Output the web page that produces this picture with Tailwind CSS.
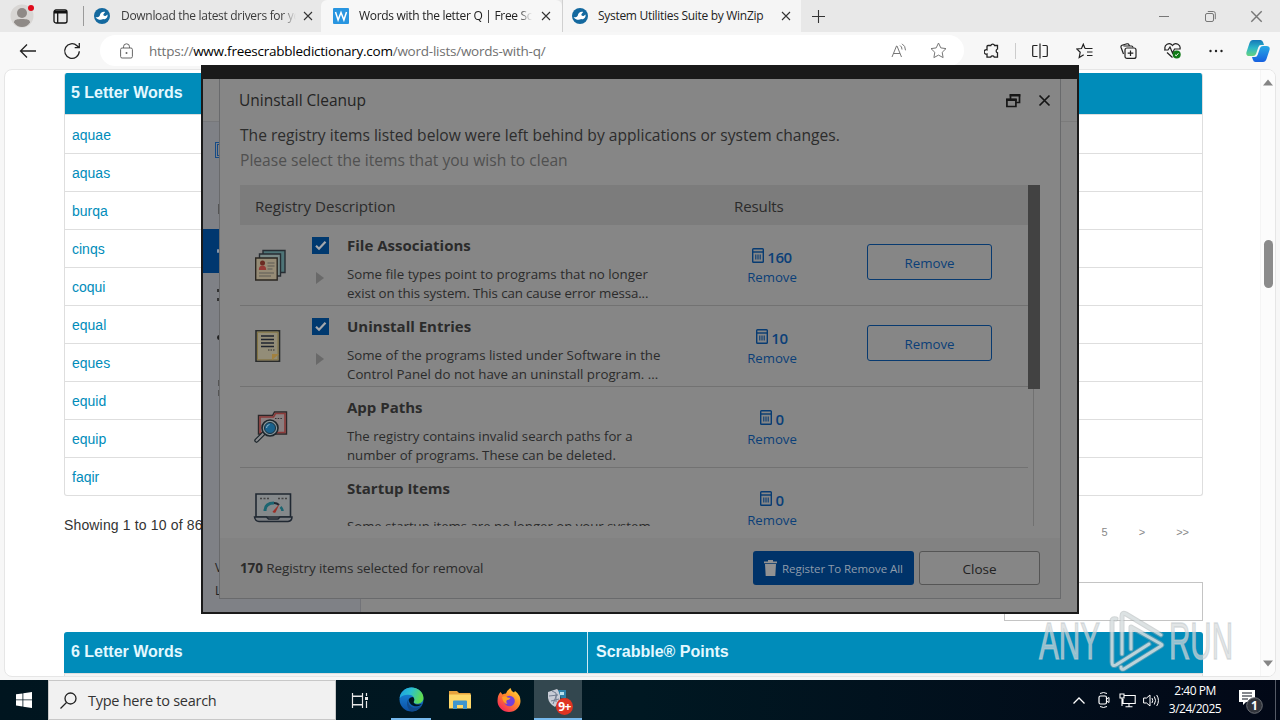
<!DOCTYPE html>
<html lang="en">
<head>
    <meta charset="UTF-8">
    <meta name="viewport" content="width=device-width, initial-scale=1.0">
    <title>Words with the letter Q | Free Scrabble Dictionary</title>
    <script src="https://cdn.jsdelivr.net/npm/@tailwindcss/browser@4"></script>
    <style>
        body {
            font-family: 'Open Sans', 'Noto Sans', sans-serif;
        }
        .page {
            font-family: 'Liberation Sans', Arial, sans-serif;
        }
    </style>
</head>
<body class="relative w-[1280px] h-[720px] overflow-hidden bg-[#f7f7f7] flex flex-col whitespace-nowrap text-[#222]">
    <!-- icons used more than once -->
    <svg class="hidden">
        <symbol id="x" viewBox="0 0 10 10"><path d="M1 1l8 8M9 1l-8 8" fill="none" stroke="currentColor" stroke-width="1.1"/></symbol>
        <symbol id="wrench" viewBox="0 0 16 16">
            <circle cx="8" cy="8" r="8" fill="#14699f"/>
            <path d="M1.500 9.200c2 .2 3.300-.3 4.200-1.500C6.200 5 8.500 3.300 11.200 4L9.300 6.200l.5 1.600 1.800.3 1.900-1.700c.6 3-1.800 5-4.300 4.700-2.200 1-4.800 1.300-7.700-1.900z" fill="#fff"/>
        </symbol>
        <symbol id="bin" viewBox="0 0 12 15">
            <rect x=".7" y=".7" width="10.600" height="13.600" rx=".8" fill="none" stroke="#073b72" stroke-width="1.400"/>
            <path d="M1 4h10" stroke="#073b72" stroke-width="1.400"/>
            <path d="M3.800 6.500v5M6 6.500v5M8.200 6.500v5" stroke="#073b72" stroke-width="1.100"/>
        </symbol>
        <symbol id="check" viewBox="0 0 17 17">
            <rect width="17" height="17" fill="#00396f"/>
            <path d="M4 8.700l3 3 6.500-7" fill="none" stroke="#a5a8ac" stroke-width="2.200"/>
        </symbol>
    </svg>

    <!-- tab strip -->
    <div class="flex h-8 shrink-0 items-center bg-[#e8e8e8] text-[12px]">
        <svg class="ml-[10px] w-6 h-6" viewBox="0 0 24 24">
            <circle cx="12" cy="12" r="11.500" fill="#d8d6d4"/>
            <circle cx="12" cy="9" r="5" fill="#8f8a87"/>
            <path d="M4 18.500c0-3 3-3.500 8-3.500s8 .5 8 3.500c-2 3-5 4.500-8 4.500s-6-1.500-8-4.500z" fill="#8f8a87"/>
            <circle cx="21" cy="4" r="3" fill="#e00b1c"/>
        </svg>
        <svg class="ml-[19px] w-[15px] h-[15px]" viewBox="0 0 15 15">
            <rect x="1" y="1" width="13" height="13" rx="2" fill="none" stroke="#111" stroke-width="1.300"/>
            <path d="M1 2h13v2.500H1z" fill="#111"/>
            <path d="M4.700 4v10" stroke="#111" stroke-width="1.300"/>
        </svg>
        <div class="ml-[15px] w-px h-5 bg-[#9a9a9a]"></div>
        <svg class="ml-[10px] w-4 h-4"><use href="#wrench"/></svg>
        <div class="ml-[11px] w-[175px] overflow-hidden text-[#3b3b3b] mask-r-from-92%"><span class="tracking-[-0.3px]">Download the latest drivers for your</span></div>
        <svg class="ml-[7px] w-[10px] h-[10px] text-[#333]"><use href="#x"/></svg>
        <div class="ml-[8px] flex h-8 w-[241px] items-center rounded-t-md bg-[#f7f7f7]">
            <svg class="ml-[12px] w-4 h-4" viewBox="0 0 16 16"><rect width="16" height="16" rx="1" fill="#2895e0"/><path d="M2.500 4l2.600 8L8 4.500 10.900 12l2.600-8" fill="none" stroke="#fff" stroke-width="1.500"/></svg>
            <div class="ml-[10px] w-[173px] overflow-hidden mask-r-from-92%"><span class="tracking-[-0.3px]">Words with the letter Q | Free Scrabble</span></div>
            <svg class="ml-[9px] w-[10px] h-[10px] text-[#333]"><use href="#x"/></svg>
        </div>
        <div class="flex h-8 w-[239px] items-center border-l border-[#d0d0d0] bg-[#f5f5f5]">
            <svg class="ml-[9px] w-4 h-4"><use href="#wrench"/></svg>
            <span class="ml-[10px] w-[173px] tracking-[-0.3px]">System Utilities Suite by WinZip</span>
            <svg class="ml-[10px] w-[10px] h-[10px] text-[#333]"><use href="#x"/></svg>
        </div>
        <svg class="ml-[10px] w-[15px] h-[15px]" viewBox="0 0 15 15"><path d="M7.500 1v13M1 7.500h13" stroke="#333" stroke-width="1.100"/></svg>
        <div class="ml-auto mr-[7px] flex items-center text-[#777]">
            <svg class="w-[11px] h-[11px]" viewBox="0 0 11 11"><path d="M0 5.500h10" stroke="currentColor"/></svg>
            <svg class="ml-[35px] w-[11px] h-[11px]" viewBox="0 0 11 11"><rect x=".5" y="2.500" width="8" height="8" rx="1.500" fill="none" stroke="currentColor"/><path d="M2.800 .5h5.500a2 2 0 0 1 2 2v5.700" fill="none" stroke="currentColor"/></svg>
            <svg class="ml-[34px] mr-[10px] w-[13px] h-[13px]"><use href="#x"/></svg>
        </div>
    </div>

    <!-- toolbar -->
    <div class="flex h-[37px] shrink-0 items-center text-[#222]">
        <svg class="ml-[19px] w-[18px] h-4" viewBox="0 0 18 16"><path d="M17 8H1.500M8 1.500L1.500 8 8 14.500" fill="none" stroke="currentColor" stroke-width="1.300"/></svg>
        <svg class="ml-[26px] w-[18px] h-[18px]" viewBox="0 0 18 18"><path d="M16.300 9.300A7.300 7.300 0 1 1 14 3.700l2 1.800M16.300 1v4.700h-4.600" fill="none" stroke="currentColor" stroke-width="1.300"/></svg>
        <div class="ml-[19px] flex h-[31px] w-[864px] items-center rounded-full bg-white">
            <svg class="ml-[20px] w-[13px] h-4 text-[#666]" viewBox="0 0 13 16"><rect x=".6" y="5" width="11.800" height="10" rx="1.500" fill="none" stroke="currentColor"/><path d="M3.500 5V3.800a3 3 0 0 1 6 0V5" fill="none" stroke="currentColor"/><circle cx="6.500" cy="10" r="1" fill="currentColor"/></svg>
            <div class="ml-[16px] pt-px text-[13.5px] tracking-[-0.24px] text-[#707070]">https://<span class="text-black">www.freescrabbledictionary.com</span>/word-lists/words-with-q/</div>
            <svg class="ml-auto w-4 h-4 text-[#777]" viewBox="0 0 16 16"><path d="M1 14L5.500 3h.5l4.500 11M2.500 10.500H9M9 2.500q2 1 2 4M11 .8q3.500 2 3.500 6.500" fill="none" stroke="currentColor"/></svg>
            <svg class="ml-[23px] mr-[17px] w-[17px] h-[17px] text-[#777]" viewBox="0 0 17 17"><path d="M8.500 1l2.300 4.900 5.200.7-3.800 3.700.9 5.300-4.600-2.500-4.600 2.500.9-5.300L1 6.600l5.200-.7z" fill="none" stroke="currentColor" stroke-linejoin="round"/></svg>
        </div>
        <svg class="ml-[20px] w-4 h-4" viewBox="0 0 16 16"><path d="M4 2.500h2.800a2 2 0 0 1 3.800 0h2.900V6a2 2 0 0 0 0 3.800v4.300h-3.200a2 2 0 0 0-3.600 0H3V11a2.200 2.200 0 1 1 0-4.200V3.500a1 1 0 0 1 1-1z" fill="none" stroke="currentColor" stroke-width="1.300"/></svg>
        <div class="ml-[15px] w-px h-4 bg-[#ccc]"></div>
        <svg class="ml-[16px] w-4 h-4" viewBox="0 0 16 16"><path d="M5.500 2.500H1.700a1 1 0 0 0-1 1v9a1 1 0 0 0 1 1h3.800M10.500 2.500h3.800a1 1 0 0 1 1 1v9a1 1 0 0 1-1 1h-3.800M8 .5v15" fill="none" stroke="currentColor" stroke-width="1.200"/></svg>
        <svg class="ml-[28px] w-[17px] h-4" viewBox="0 0 17 16"><path d="M9 5.500h7.500M11 9h5.500M11 12.500h5.500M9 5.500L7.300 1.200 5.500 5.500.8 6l3.400 3.300-1 5.200 4.500-2.700" fill="none" stroke="currentColor" stroke-width="1.200"/></svg>
        <svg class="ml-[27px] w-[17px] h-4" viewBox="0 0 17 16"><rect x="5" y="5" width="11" height="10.400" rx="2" fill="none" stroke="currentColor" stroke-width="1.200"/><path d="M10.500 7.500v5.500M7.700 10.200h5.600M3.500 11L1 4.200Q.700 3 2 2.300L7 .8q1.500-.3 2 1l.5 1.200M3.500 3h8q1.300 0 1.500 1.500" fill="none" stroke="currentColor" stroke-width="1.200"/></svg>
        <svg class="ml-[27px] w-[17px] h-[17px]" viewBox="0 0 17 17"><path d="M1.200 7.500C-.5 3 5.500-.5 8.500 3.500c3-4 9-.5 7.300 4M0 8h4l2-3 2.500 6L10.500 7h5M3 10.500l5.500 5" fill="none" stroke="currentColor" stroke-width="1.200"/><circle cx="12.700" cy="12.500" r="4" fill="#117a17"/><path d="M11 12.700l1.200 1.100 2.200-2.500" fill="none" stroke="#fff"/></svg>
        <svg class="ml-[27px] w-4 h-4" viewBox="0 0 16 16" fill="currentColor"><circle cx="2.500" cy="8" r="1.200"/><circle cx="8" cy="8" r="1.200"/><circle cx="13.500" cy="8" r="1.200"/></svg>
        <svg class="ml-[22px] w-6 h-6" viewBox="0 0 24 24">
            <defs>
                <linearGradient id="c1" x1="0" y1="0" x2="0" y2="1"><stop offset="0" stop-color="#1578b8"/><stop offset=".5" stop-color="#2cb6c8"/><stop offset="1" stop-color="#67d37e"/></linearGradient>
                <linearGradient id="c2" x1="0" y1="0" x2="0" y2="1"><stop offset="0" stop-color="#27a9e4"/><stop offset="1" stop-color="#1760e0"/></linearGradient>
            </defs>
            <path d="M7 1h7.500q2 0 2.700 2.500L18 6h-3q-2 0-2.700 2.200L10 15q-.8 2-3 2H3.500Q-.5 17 .5 13L3.500 4Q4.500 1 7 1z" fill="url(#c1)"/>
            <path d="M17 23H9.500q-2 0-2.700-2.500L6 18h3q2 0 2.700-2.200L14 9q.8-2 3-2h3.500q4 0 3 4l-3 9q-1 3-3.500 3z" fill="url(#c2)"/>
        </svg>
    </div>

    <!-- web page -->
    <div class="page mx-1 flex h-[608px] shrink-0 overflow-hidden rounded-lg border border-[#e6e6e6] bg-white">
        <div class="ml-[59px] w-[1139px] pt-[3px]">
            <div class="overflow-hidden rounded-[3px] border border-[#dedede] border-t-0 text-[14px] text-[#008cba]">
                <div class="flex h-[41px] items-center bg-[#008cba] pl-[6px] pb-[2px] text-[16px] font-bold text-[#e4f8ff]">5 Letter Words</div>
                <div class="h-[39px] border-t border-[#dedede] pl-[7px] leading-[40px]">aquae</div>
                <div class="h-[38px] border-t border-[#dedede] pl-[7px] leading-[38px]">aquas</div>
                <div class="h-[38px] border-t border-[#dedede] pl-[7px] leading-[38px]">burqa</div>
                <div class="h-[38px] border-t border-[#dedede] pl-[7px] leading-[38px]">cinqs</div>
                <div class="h-[38px] border-t border-[#dedede] pl-[7px] leading-[38px]">coqui</div>
                <div class="h-[38px] border-t border-[#dedede] pl-[7px] leading-[38px]">equal</div>
                <div class="h-[38px] border-t border-[#dedede] pl-[7px] leading-[38px]">eques</div>
                <div class="h-[38px] border-t border-[#dedede] pl-[7px] leading-[38px]">equid</div>
                <div class="h-[38px] border-t border-[#dedede] pl-[7px] leading-[38px]">equip</div>
                <div class="h-[38px] border-t border-[#dedede] pl-[7px] leading-[38px]">faqir</div>
            </div>
            <div class="mt-[16px] flex h-[70px] items-start text-[14px] leading-[26px] text-[#333]">
                <span class="tracking-[0.15px]">Showing 1 to 10 of 86</span>
                <div class="ml-auto mr-[14px] flex gap-[31px] pt-[7px] text-[11px] text-[#888]"><span>5</span><span>&gt;</span><span>&gt;&gt;</span></div>
            </div>
            <div class="ml-auto h-[39px] w-[199px] border border-[#c4c4c4]"></div>
            <div class="mt-[11px] flex h-[41px] rounded-t-[3px] bg-[#008cba] text-[16px] font-bold leading-[40px] text-[#e4f8ff]">
                <div class="w-[524px] border-r border-[#cdeaf4] pl-[7px]">6 Letter Words</div>
                <div class="pl-2">Scrabble® Points</div>
            </div>
            <div class="h-3 border-x border-t border-[#dedede] bg-[#f4f4f4]"></div>
        </div>
        <!-- scrollbar -->
        <div class="ml-auto flex w-[15px] flex-col items-center border-l border-[#f5f5f5] bg-[#fcfcfc]">
            <svg class="mt-[9px] w-[10px] h-[7px]" viewBox="0 0 10 7"><path d="M0 6.500L5 .5l5 6z" fill="#858585"/></svg>
            <div class="mt-[154px] h-[48px] w-[9px] rounded-full bg-[#8b8b8b]"></div>
            <svg class="mt-auto mb-[9px] w-[10px] h-[7px]" viewBox="0 0 10 7"><path d="M0 .5l5 6 5-6z" fill="#858585"/></svg>
        </div>
    </div>

    <!-- taskbar -->
    <div class="mt-auto flex h-10 shrink-0 items-center bg-linear-to-r from-[#00151f] via-[#001822] to-[#020817] text-white">
        <svg class="ml-4 w-4 h-4" viewBox="0 0 16 16" fill="#fff"><path d="M0 2.300L6.500 1.400v6.100H0zM7.300 1.300L16 0v7.500H7.300zM0 8.300h6.500v6.200L0 13.600zM7.300 8.300H16V16l-8.700-1.300z"/></svg>
        <div class="ml-4 flex h-10 w-[288px] items-center border border-[#c8c8c8] bg-[#f1f1f1] text-[#333]">
            <svg class="ml-[11px] w-[17px] h-[17px]" viewBox="0 0 17 17"><circle cx="10.500" cy="6.500" r="5.500" fill="none" stroke="#222" stroke-width="1.300"/><path d="M6.500 10.500L.5 16.500" stroke="#222" stroke-width="1.300"/></svg>
            <span class="ml-[11px] pt-[2px] text-[14.500px] tracking-[-0.26px]">Type here to search</span>
        </div>
        <svg class="ml-[15px] w-[18px] h-[17px]" viewBox="0 0 18 17"><path d="M1.500 1v3h10V1M1.500 16v-3h10v3M1.500 4.500h10v8h-10zM15.500 1v3M15.500 9v7" fill="none" stroke="#e8e8e8" stroke-width="1.200"/><rect x="14" y="5" width="3" height="3" fill="#e8e8e8"/></svg>
        <div class="ml-[22px] flex h-10 w-10 items-center justify-center border-b-2 border-[#76b9ed]">
            <svg class="w-[25px] h-[25px]" viewBox="0 0 24 24">
                <defs>
                    <linearGradient id="e1" x1="0" y1="0" x2="1" y2=".3"><stop offset="0" stop-color="#1b9de2"/><stop offset=".5" stop-color="#2bc0d0"/><stop offset="1" stop-color="#5fdb50"/></linearGradient>
                    <linearGradient id="e2" x1="0" y1="0" x2="0" y2="1"><stop offset="0" stop-color="#1a8de0"/><stop offset="1" stop-color="#0c50a4"/></linearGradient>
                </defs>
                <circle cx="12" cy="12" r="11.500" fill="url(#e2)"/>
                <path d="M.6 11C1 5 6 .5 12 .5S23.500 5 23.500 10.500c0 3.500-3 5.500-6 5.500-2.500 0-4-.8-3.500-1.800 1.500-2 .5-6.700-4.500-6.700-4.500 0-8 1.500-8.900 3.500z" fill="url(#e1)"/>
                <path d="M9.500 11c-2 4 1 9 6 9 2.500 0 4.500-.8 6-2-2 3-5 5.400-9 5.500C8 22 6 15 9.500 11z" fill="#114a8b"/>
                <path d="M14 14.300c1-1.200 1-3.300-.5-4.800-2 0-4 1-4.200 3 .5 3.500 4 6.500 8 6 2-.2 3.800-1.300 4.500-2.300-3.300 1.200-7.800.5-7.800-1.900z" fill="#00151f"/>
            </svg>
        </div>
        <svg class="ml-[18px] w-[22px] h-[20px]" viewBox="0 0 22 20"><path d="M0 1h8l2 2h11.500v5H0z" fill="#e8a33d"/><path d="M0 4.500h22V18.500H0z" fill="#ffd869"/><path d="M4 19v-7.500q0-1 1-1h12q1 0 1 1V19h-4v-4H8v4z" fill="#3f96d0"/></svg>
        <svg class="ml-[26px] w-6 h-6" viewBox="0 0 24 24">
            <defs><linearGradient id="f1" x1="1" y1="0" x2=".2" y2="1"><stop offset="0" stop-color="#ffe83f"/><stop offset=".45" stop-color="#ff9128"/><stop offset="1" stop-color="#f5215b"/></linearGradient></defs>
            <path d="M3.500 4l2 2.500Q7 5.500 9 5.500 10.500 2 13.500 0q.5 3 3.500 4.500l1-1.500q5.500 4 5.500 10A11.500 11 0 0 1 .5 13Q.5 7 3.500 4z" fill="url(#f1)"/>
            <circle cx="12.500" cy="13" r="5.300" fill="#7340d8"/>
            <path d="M5 9q3-1.500 5.500.5l3 .5q-1 2-3.500 2-1.500 2 .5 4Q6 15.500 5 9z" fill="#ff9e25"/>
        </svg>
        <div class="relative ml-[13px] flex h-10 w-12 justify-center border-b-2 border-[#76b9ed] bg-[#33474f]">
            <svg class="mt-[8px] w-6 h-6" viewBox="0 0 24 24"><path d="M2 4l9-3 3 3v9l-5 6q-6-3-7-9z" fill="#c8ccd6"/><path d="M6 3l4 2v9M3 8l9-1M5 13l8-2M7 16l4-10" stroke="#737e91" fill="none"/><path d="M12 2h8v8h-5z" fill="#2f80a8"/><path d="M14 4h4v3h-4z" fill="#b9e1ee"/></svg>
            <span class="absolute left-[22px] top-[18px] flex h-[17px] w-[17px] items-center justify-center rounded-full bg-[#df3422] text-[12px] font-bold tracking-[-0.5px]">9+</span>
        </div>
        <div class="ml-auto flex h-10 items-center">
            <svg class="w-[12px] h-[7px]" viewBox="0 0 12 7"><path d="M.5 6.500L6 1l5.500 5.500" fill="none" stroke="#fff" stroke-width="1.300"/></svg>
            <svg class="ml-[13px] w-[12px] h-[18px]" viewBox="0 0 12 18"><rect x="1" y="5" width="7.500" height="8" rx="1.500" fill="none" stroke="#fff" stroke-width="1.200"/><path d="M8.500 8l2.500-1.500v5L8.500 10M2 2.500q3.500-2 7 0M2 15.500q3.500 2 7 0" fill="none" stroke="#fff"/></svg>
            <svg class="ml-[9px] w-[17px] h-[15px]" viewBox="0 0 17 15"><path d="M5.500 2.500h10.700v8H4V6M10 10.500v3M6.500 13.700h7M1 1h4v4H1zM3 5v8" fill="none" stroke="#fff" stroke-width="1.100"/></svg>
            <svg class="ml-[7px] w-[17px] h-[15px]" viewBox="0 0 17 15"><path d="M.6 5h3L7 2v11l-3.400-3h-3z" fill="none" stroke="#fff"/><path d="M9 5q1.500 2.500 0 5M11.300 3.500q2.500 4 0 8M13.700 2q3.500 5.500 0 11" fill="none" stroke="#fff"/></svg>
            <div class="ml-[8px] w-[54px] text-center text-[12px] leading-[18px] tracking-[-0.5px]">2:40 PM<br>3/24/2025</div>
            <svg class="ml-[17px] mt-[3px] w-[25px] h-[26px]" viewBox="0 0 25 26"><path d="M0 1h16v12h-9l-3 3v-3H0z" fill="#fff"/><path d="M3 4h10M3 7h10M3 10h6" stroke="#0a101c" stroke-width="1.200"/><circle cx="15.500" cy="16.500" r="7.800" fill="#31343b" stroke="#6b6e75"/><text x="15.500" y="21" text-anchor="middle" font-size="12" font-weight="bold" fill="#fff">1</text></svg>
            <div class="ml-[11px] mr-[4px] h-10 w-px bg-[#555a66]"></div>
        </div>
    </div>

    <!-- application window over the page -->
    <div class="absolute left-[201px] top-[65px] flex h-[549px] w-[878px] flex-col border-2 border-t-[14px] border-[#1a1a1a] bg-[#868686]">
        <div class="flex min-h-0 flex-1">
            <!-- strip of the main window left of the dialog -->
            <div class="flex w-4 flex-col overflow-hidden bg-[#7f8186]">
                <div class="h-[43px] shrink-0 border-b border-[#77787b] bg-[#868686]"></div>
                <div class="ml-[12px] mt-[20px] h-[16px] w-4 shrink-0 border border-[#164b86] p-px"><div class="h-full w-4 border border-[#164b86]"></div></div>
                <div class="ml-[15px] mt-[46px] h-[10px] w-px shrink-0 bg-[#555]"></div>
                <div class="mt-[15px] flex h-[44px] shrink-0 items-center bg-[#00376f]"><span class="ml-[14px] h-[4px] w-[4px] rounded-full bg-[#8795a6]"></span></div>
                <div class="ml-[14px] mt-[16px] h-[12px] w-1 shrink-0 border-y-[3px] border-[#333]"></div>
                <div class="ml-[14px] mt-[34px] h-[5px] w-1 shrink-0 rounded-l-full bg-[#222]"></div>
                <div class="ml-[15px] mt-[40px] h-[16px] w-px shrink-0 border-y-[6px] border-[#555]"></div>
                <div class="mt-auto -mb-[3px] shrink-0 pl-[12px] text-[12px] leading-[23px] text-[#222]">V<br>L</div>
            </div>
            <div class="flex w-[842px] flex-col border border-t-0 border-[#696a6c] bg-[#868686]">
                <div class="flex h-[43px] items-center pl-[19px]">
                    <span class="text-[15.5px] font-medium text-[#242424]">Uninstall Cleanup</span>
                    <svg class="ml-auto w-4 h-4" viewBox="0 0 16 16"><path d="M1.900 6.500h9v7h-9zM5.500 6V2h9v7.500h-3.500" fill="none" stroke="#161616" stroke-width="1.700"/><path d="M1.100 6.800h10.600M4.700 2.300h10.600" stroke="#161616" stroke-width="2.400"/></svg>
                    <svg class="ml-[17px] mr-[9px] w-[13px] h-[13px] text-[#161616]" viewBox="0 0 13 13"><path d="M1.500 1.500l10 10M11.500 1.500l-10 10" stroke="currentColor" stroke-width="1.700"/></svg>
                </div>
                <div class="mt-px pl-5 text-[15.6px] leading-[25px]">
                    <p class="font-medium text-[#2c2c2c]">The registry items listed below were left behind by applications or system changes.</p>
                    <p class="font-medium text-[#505050]">Please select the items that you wish to clean</p>
                </div>
                <!-- list -->
                <div class="ml-5 mt-[12px] flex h-[341px] w-[800px] overflow-hidden text-[#2b2b2b]">
                    <div class="w-[788px]">
                        <div class="flex h-10 items-center bg-[#7c7c7c] pt-[3px] text-[15.100px]">
                            <span class="w-[494px] pl-[15px]">Registry Description</span>
                            <span class="tracking-[-0.15px]">Results</span>
                        </div>
                        <div class="flex h-[81px] border-b border-[#727272]">
                            <svg class="ml-[14px] mt-[24px] w-[34px] h-[34px]" viewBox="0 0 34 34"><path d="M9 1.500h22v22H9z" fill="#4e7477" stroke="#272d33" stroke-width="1.400"/><path d="M5.500 5h21v22h-21z" fill="#788a88" stroke="#272d33" stroke-width="1.400"/><path d="M1.700 9h21.500v22H1.700z" fill="#968c76" stroke="#2b2722" stroke-width="1.400"/><circle cx="8.500" cy="14" r="2.500" fill="#6b2b22"/><path d="M4.800 21q0-4.500 3.700-4.500t3.700 4.500z" fill="#963b36"/><path d="M13.500 14h7M13.500 17h7M13.500 20h5M5 24h15M5 27h12" stroke="#5d5a55"/></svg>
                            <div class="ml-[24px] mt-[12px] w-[17px]">
                                <svg class="w-[17px] h-[17px]"><use href="#check"/></svg>
                                <svg class="ml-[4px] mt-[18px] w-2 h-3" viewBox="0 0 8 12"><path d="M0 0l8 6-8 6z" fill="#696969"/></svg>
                            </div>
                            <div class="ml-[18px] w-[385px] pt-[9px]">
                                <h3 class="text-[15px] font-bold leading-[22px]">File Associations</h3>
                                <p class="mt-[9px] text-[13.300px] leading-[19px]">Some file types point to programs that no longer<br><span class="tracking-[-0.12px]">exist on this system. This can cause error messa...</span></p>
                            </div>
                            <div class="flex w-[80px] flex-col items-center pt-[22px] text-[#0b3f78]">
                                <div class="flex h-5 items-center text-[15px] font-semibold tracking-[-0.4px]"><svg class="mb-[3px] mr-[3px] w-[12px] h-[15px]"><use href="#bin"/></svg>160</div>
                                <span class="text-[13.200px] leading-[20px]">Remove</span>
                            </div>
                            <div class="ml-[55px] mt-[19px] flex h-9 w-[125px] items-center justify-center rounded-[3px] border border-[#083a70] pt-[3px] text-[13.300px] text-[#0b3f78]">Remove</div>
                        </div>
                        <div class="flex h-[81px] border-b border-[#727272]">
                            <svg class="ml-[14px] mt-[23px] w-[34px] h-[34px]" viewBox="0 0 34 34"><path d="M2 1.700h23.500v30.600H2z" fill="#938d78" stroke="#2a2c2c" stroke-width="1.600"/><path d="M3.500 3.200h20.500v27.600H3.500z" fill="none" stroke="#837443"/><path d="M7 7h13M7 10.500h13M7 14h13M7 17.500h13" stroke="#20252f" stroke-width="1.700"/><path d="M14 21h7" stroke="#333" stroke-dasharray="1.500 1"/><path d="M18 31v-6h7z" fill="#a2813f"/></svg>
                            <div class="ml-[24px] mt-[12px] w-[17px]">
                                <svg class="w-[17px] h-[17px]"><use href="#check"/></svg>
                                <svg class="ml-[4px] mt-[18px] w-2 h-3" viewBox="0 0 8 12"><path d="M0 0l8 6-8 6z" fill="#696969"/></svg>
                            </div>
                            <div class="ml-[18px] w-[385px] pt-[9px]">
                                <h3 class="text-[15px] font-bold leading-[22px]">Uninstall Entries</h3>
                                <p class="mt-[9px] text-[13.300px] leading-[19px]">Some of the programs listed under Software in the<br>Control Panel do not have an uninstall program. ...</p>
                            </div>
                            <div class="flex w-[80px] flex-col items-center pt-[22px] text-[#0b3f78]">
                                <div class="flex h-5 items-center text-[15px] font-semibold tracking-[-0.4px]"><svg class="mb-[3px] mr-[3px] w-[12px] h-[15px]"><use href="#bin"/></svg>10</div>
                                <span class="text-[13.200px] leading-[20px]">Remove</span>
                            </div>
                            <div class="ml-[55px] mt-[19px] flex h-9 w-[125px] items-center justify-center rounded-[3px] border border-[#083a70] pt-[3px] text-[13.300px] text-[#0b3f78]">Remove</div>
                        </div>
                        <div class="flex h-[81px] border-b border-[#727272]">
                            <svg class="ml-[14px] mt-[23px] w-[34px] h-[34px]" viewBox="0 0 34 34"><path d="M4.500 5.500h14l2-3.500h12v22H4.500z" fill="#8a7f80" stroke="#2c2729" stroke-width="1.400"/><path d="M6 7h13.500l2-3.500h9.500v19H6z" fill="none" stroke="#8b3a39" stroke-width="1.600"/><path d="M21 8.500h8" stroke="#333" stroke-dasharray="1.500 1.200"/><path d="M9.500 23.500l-7 7" stroke="#1d262c" stroke-width="4.500" stroke-linecap="round"/><path d="M9.500 23.500l-7 7" stroke="#8a8c8e" stroke-width="2" stroke-linecap="round"/><circle cx="16" cy="18" r="8" fill="#84949a" stroke="#1d262c" stroke-width="1.600"/><circle cx="16" cy="18" r="5.500" fill="#19618c" stroke="#1d303d"/><path d="M12.500 18q0-3 3-3.500" fill="none" stroke="#8fb4c8"/></svg>
                            <div class="ml-[59px] w-[385px] pt-[9px]">
                                <h3 class="text-[15px] font-bold leading-[22px]">App Paths</h3>
                                <p class="mt-[9px] text-[13.200px] leading-[19px]">The registry contains invalid search paths for a<br>number of programs. These can be deleted.</p>
                            </div>
                            <div class="flex w-[80px] flex-col items-center pt-[22px] text-[#0b3f78]">
                                <div class="flex h-5 items-center text-[15px] font-semibold tracking-[-0.4px]"><svg class="mb-[3px] mr-[3px] w-[12px] h-[15px]"><use href="#bin"/></svg>0</div>
                                <span class="text-[13.200px] leading-[20px]">Remove</span>
                            </div>
                        </div>
                        <div class="flex h-[58px] overflow-hidden">
                            <svg class="ml-[13px] mt-[24px] w-[40px] h-[34px]" viewBox="0 0 40 34"><path d="M3 2h34.500v23H3z" fill="#85898b" stroke="#202832" stroke-width="1.600"/><path d="M1.500 25h12l2 2h9.500l2-2h12q0 4-4 4.500H6q-4-.5-4.500-4.500z" fill="#7b7e82" stroke="#202832" stroke-width="1.500"/><path d="M7 6.500h9M25 6.500h9" stroke="#444" stroke-width="1.600" stroke-dasharray="2 1.500"/><path d="M12 19q0-8 9-8" fill="none" stroke="#1b6571" stroke-width="3"/><path d="M21 11q3 0 5 2" fill="none" stroke="#202832" stroke-width="2"/><path d="M27.500 15q2 2 2 4" fill="none" stroke="#1b6571" stroke-width="2.500"/><path d="M26.500 12l-4 8.500q-2 1-3-.8z" fill="#9b3029"/></svg>
                            <div class="ml-[54px] w-[385px] pt-[9px]">
                                <h3 class="text-[15px] font-bold leading-[22px]">Startup Items</h3>
                                <p class="mt-[18px] text-[13.200px] leading-[19px]">Some startup items are no longer on your system</p>
                            </div>
                            <div class="flex w-[80px] flex-col items-center pt-[22px] text-[#0b3f78]">
                                <div class="flex h-5 items-center text-[15px] font-semibold tracking-[-0.4px]"><svg class="mb-[3px] mr-[3px] w-[12px] h-[15px]"><use href="#bin"/></svg>0</div>
                                <span class="text-[13.200px] leading-[20px]">Remove</span>
                            </div>
                        </div>
                    </div>
                    <div class="flex w-3 flex-col">
                        <div class="h-[204px] shrink-0 bg-[#424242]"></div>
                        <div class="ml-[5px] h-[137px] w-px bg-[#717171]"></div>
                    </div>
                </div>
                <!-- footer -->
                <div class="mt-auto flex h-[60px] items-center bg-[#828282] pl-5 pr-5">
                    <span class="text-[13.500px] tracking-[-0.1px] text-[#2b2b2b]"><b>170</b> Registry items selected for removal</span>
                    <div class="ml-auto flex h-[34px] w-[161px] items-center rounded-[3px] bg-[#003369] pl-[11px] text-[11.500px] text-[#8f9cab]">
                        <svg class="mr-[5px] w-[13px] h-[16px]" viewBox="0 0 13 16" fill="#929292"><path d="M4 1.500V0h5v1.500h4v1.800H0V1.500zM1 4h11l-.7 12H1.700z"/></svg>
                        <span class="pt-[2px] tracking-[-0.05px]">Register To Remove All</span>
                    </div>
                    <div class="ml-[5px] flex h-[34px] w-[121px] items-center justify-center rounded-[3px] border border-[#555] bg-[#868686] pt-[2px] text-[13.500px] text-[#222]">Close</div>
                </div>
            </div>
            <div class="flex-1 bg-[#868686]"><div class="h-[43px] border-b border-[#7b7b7b]"></div></div>
        </div>
        <div class="flex h-[13px] shrink-0"><div class="w-[158px] border-r border-[#727378] bg-[#7f8186]"></div></div>
    </div>

    <!-- watermark -->
    <svg class="absolute left-[1030px] top-[605px] h-[72px] w-[212px]" viewBox="0 0 212 72">
        <g fill="#d5dadc" fill-opacity=".7" stroke="#c3cacd" stroke-opacity=".6" stroke-width="1.500" font-family="Liberation Sans Narrow, Liberation Sans, sans-serif" font-size="51">
            <text x="9" y="54" textLength="61" lengthAdjust="spacingAndGlyphs">ANY</text>
            <text x="139" y="54" textLength="64" lengthAdjust="spacingAndGlyphs">RUN</text>
        </g>
        <g fill="none" stroke-linejoin="round" stroke-linecap="round">
            <path d="M92 49V11q0-4 4-2l35 21M101 44V22l30 17q2 1 0 2L94 64q-3 1-3-2M119 39L86 60q-4 2-4-3V16q0-3 4-2" stroke="#a5adb0" stroke-opacity=".5" stroke-width="5"/>
            <path d="M92 49V11q0-4 4-2l35 21M101 44V22l30 17q2 1 0 2L94 64q-3 1-3-2M119 39L86 60q-4 2-4-3V16q0-3 4-2" stroke="#dfe5e7" stroke-opacity=".75" stroke-width="3"/>
        </g>
    </svg>
</body>
</html>
